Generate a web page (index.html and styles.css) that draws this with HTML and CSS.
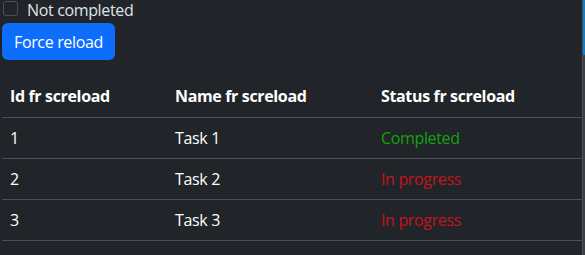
FILE: index.html
```html
<!DOCTYPE html>
<html lang="en">
<head>
    <meta charset="UTF-8">
    <meta name="viewport" content="width=device-width, initial-scale=1.0">
    <title>Tasks</title>
    <link rel="stylesheet" href="styles.css">
</head>
<body>
    <div class="page">
        <main class="content">
            <label class="form-check">
                <input type="checkbox" class="check">
                <span>Not completed</span>
            </label>
            <button type="button" class="btn">Force reload</button>

            <table class="tasks">
                <thead>
                    <tr>
                        <th>Id fr screload</th>
                        <th>Name fr screload</th>
                        <th>Status fr screload</th>
                    </tr>
                </thead>
                <tbody>
                    <tr>
                        <td>1</td>
                        <td>Task 1</td>
                        <td class="done">Completed</td>
                    </tr>
                    <tr>
                        <td>2</td>
                        <td>Task 2</td>
                        <td class="pending">In progress</td>
                    </tr>
                    <tr>
                        <td>3</td>
                        <td>Task 3</td>
                        <td class="pending">In progress</td>
                    </tr>
                </tbody>
            </table>
        </main>
        <div class="side"></div>
    </div>
</body>
</html>
```

FILE: styles.css
```css
* {
    margin: 0;
    padding: 0;
    box-sizing: border-box;
}

body {
    font-family: "Open Sans", "Noto Sans", sans-serif;
    font-size: 16px;
    line-height: 24px;
    letter-spacing: -0.35px;
    background-color: #212529;
    color: #dee2e6;
    height: 255px;
    overflow: hidden;
}

.page {
    display: flex;
    height: 100%;
}

.content {
    flex: 1;
    padding-left: 2px;
}

.side {
    width: 3px;
    border-left: 1px solid #495057;
    background: linear-gradient(#0d7fc7 0, #0d7fc7 55px, #3a3f44 55px);
}

.form-check {
    display: flex;
    align-items: flex-start;
    gap: 9px;
    height: 23px;
    padding-left: 1px;
    line-height: 20px;
}

.check {
    appearance: none;
    width: 15px;
    height: 15px;
    margin-top: 1px;
    border: 1px solid #495057;
    border-radius: 3px;
    background-color: #212529;
}

.btn {
    font-family: inherit;
    font-size: 16px;
    line-height: 24px;
    letter-spacing: -0.35px;
    background-color: #0d6efd;
    color: #fff;
    padding: 7px 12px;
    border: none;
    border-radius: 6px;
    height: 37px;
    margin-bottom: 16px;
    cursor: pointer;
}

.tasks {
    width: 580px;
    border-collapse: collapse;
}

.tasks th,
.tasks td {
    padding: 8px;
    text-align: left;
    border-bottom: 1px solid #495057;
    height: 41px;
}

.tasks th {
    color: #fff;
    font-weight: bold;
}

.tasks th:nth-child(1) { width: 165px; }
.tasks th:nth-child(2) { width: 206px; }

.tasks td {
    color: #fff;
}

.tasks td.done {
    color: #13a10e;
}

.tasks td.pending {
    color: #c1141c;
}
```
